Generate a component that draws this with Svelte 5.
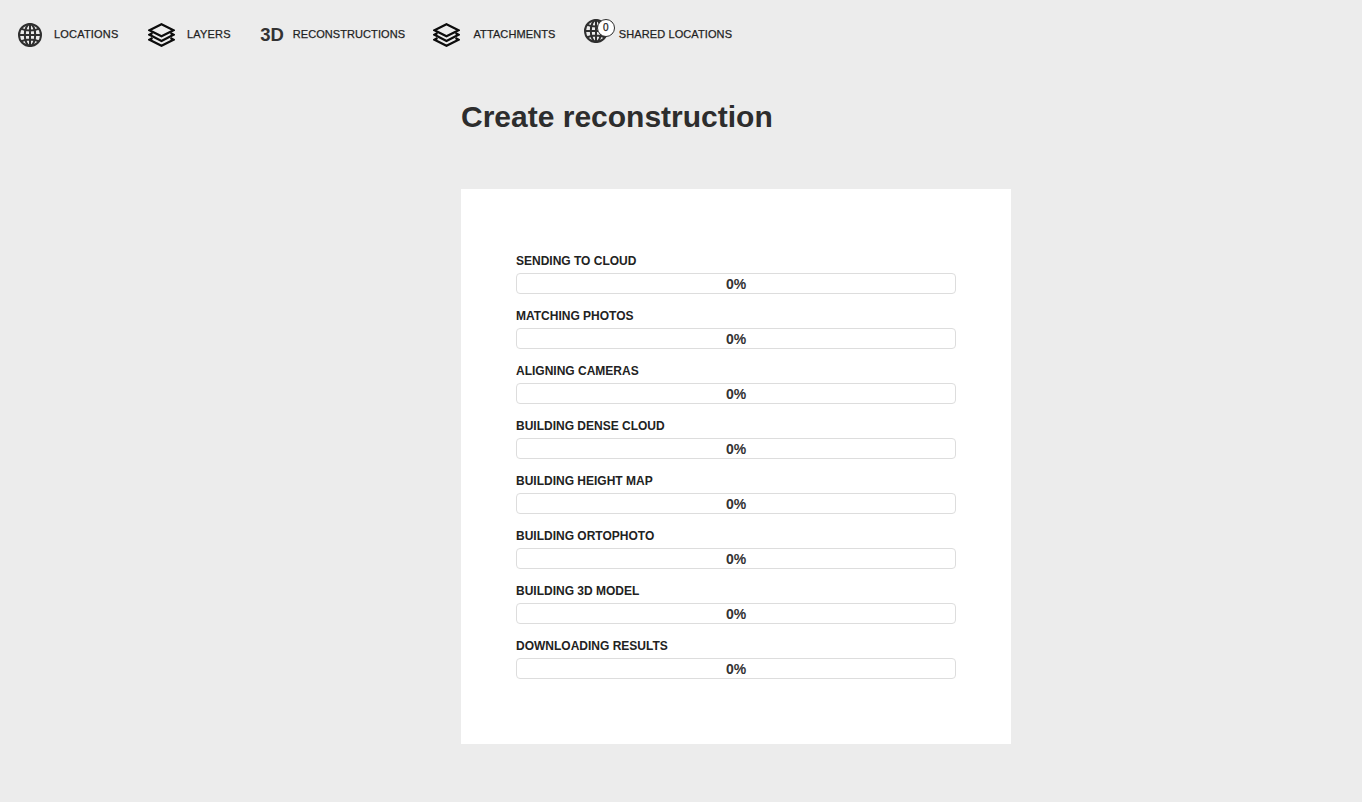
<script lang="ts">
const steps = [
  "Sending to cloud",
  "Matching photos",
  "Aligning cameras",
  "Building dense cloud",
  "Building height map",
  "Building ortophoto",
  "Building 3D model",
  "Downloading results"
];
</script>

{#snippet globe()}
  <svg class="globe" viewBox="0 0 24 24" fill="none" stroke="#2f2f2f" stroke-width="2">
    <circle cx="12" cy="12" r="11" />
    <ellipse cx="12" cy="12" rx="5.2" ry="11" />
    <path d="M12 1v22M1 12h22M3 5.6c5 2.6 13 2.6 18 0M3 18.4c5-2.6 13-2.6 18 0" />
  </svg>
{/snippet}

{#snippet layers()}
  <svg class="layers" viewBox="0 0 27 24" fill="none" stroke="#0c0c0c" stroke-width="2.2">
    <path d="M13.5 1.2 25.5 7.2l-12 6L1.5 7.2z" />
    <path d="M4.5 10 1.5 11.7l12 6.3 12-6.3-3-1.7" />
    <path d="M4.5 15 1.5 16.7l12 6.1 12-6.1-3-1.7" />
  </svg>
{/snippet}

<nav class="nav">
  <a class="item" href="#locations">
    {@render globe()}
    <span>Locations</span>
  </a>
  <a class="item" href="#layers">
    {@render layers()}
    <span>Layers</span>
  </a>
  <a class="item tight" href="#reconstructions">
    <b class="three-d">3D</b>
    <span>Reconstructions</span>
  </a>
  <a class="item attachments" href="#attachments">
    {@render layers()}
    <span>Attachments</span>
  </a>
  <a class="item shared" href="#shared">
    <div class="globe-wrap">
      {@render globe()}
      <i class="badge">0</i>
    </div>
    <span>Shared locations</span>
  </a>
</nav>

<main class="main">
  <h1>Create reconstruction</h1>
  <section class="card">
    {#each steps as step}
      <div class="step">
        <label>{step}</label>
        <div class="bar">0%</div>
      </div>
    {/each}
  </section>
</main>

<style>
  :global(body) {
    background: #ececec;
    font-family: "Liberation Sans", Arial, sans-serif;
    color: #2d2d2d;
  }

  .nav {
    display: flex;
    align-items: center;
    gap: 29.4px;
    height: 69px;
    padding-left: 18px;
  }

  .item {
    display: flex;
    align-items: center;
    gap: 12px;
    color: #1f1f1f;
    text-decoration: none;
    font-size: 11px;
    letter-spacing: 0.2px;
    -webkit-text-stroke: 0.25px #1f1f1f;
    text-transform: uppercase;
  }

  .item span {
    margin-bottom: 2px;
  }

  .item.tight {
    gap: 9px;
    margin-right: -1px;
    letter-spacing: 0.07px;
  }

  .item.attachments {
    gap: 13px;
    letter-spacing: 0.1px;
  }

  .item.shared {
    gap: 11px;
    margin-left: -1px;
    letter-spacing: 0.1px;
  }

  .globe {
    display: block;
    width: 24px;
    height: 24px;
  }

  .layers {
    display: block;
    width: 27px;
    height: 24px;
  }

  .three-d {
    font-size: 18.5px;
    font-weight: 700;
    letter-spacing: 0;
    color: #333;
    -webkit-text-stroke: 0;
  }

  .globe-wrap {
    position: relative;
    margin-top: -8px;
  }

  .badge {
    position: absolute;
    top: 0;
    left: 13px;
    width: 16px;
    height: 16px;
    border: 1px solid #2d2d2d;
    border-radius: 50%;
    background: #fff;
    color: #222;
    font-style: normal;
    font-size: 10px;
    line-height: 16px;
    text-align: center;
  }

  .main {
    padding-left: 461px;
    width: 550px;
  }

  h1 {
    margin: 29px 0 53px;
    font-size: 30px;
    line-height: 38px;
    font-weight: 700;
    color: #2d2d2d;
  }

  .card {
    display: flex;
    flex-direction: column;
    gap: 13px;
    box-sizing: border-box;
    width: 550px;
    height: 555px;
    padding: 63px 55px 0;
    background: #fff;
  }

  .step {
    display: flex;
    flex-direction: column;
    gap: 5px;
  }

  label {
    font-size: 12px;
    line-height: 18px;
    height: 16px;
    font-weight: 700;
    text-transform: uppercase;
    color: #222;
  }

  .bar {
    box-sizing: border-box;
    height: 21px;
    border: 1px solid #ddd;
    border-radius: 4px;
    font-size: 14px;
    font-weight: 700;
    line-height: 21px;
    text-align: center;
    color: #333;
  }
</style>
